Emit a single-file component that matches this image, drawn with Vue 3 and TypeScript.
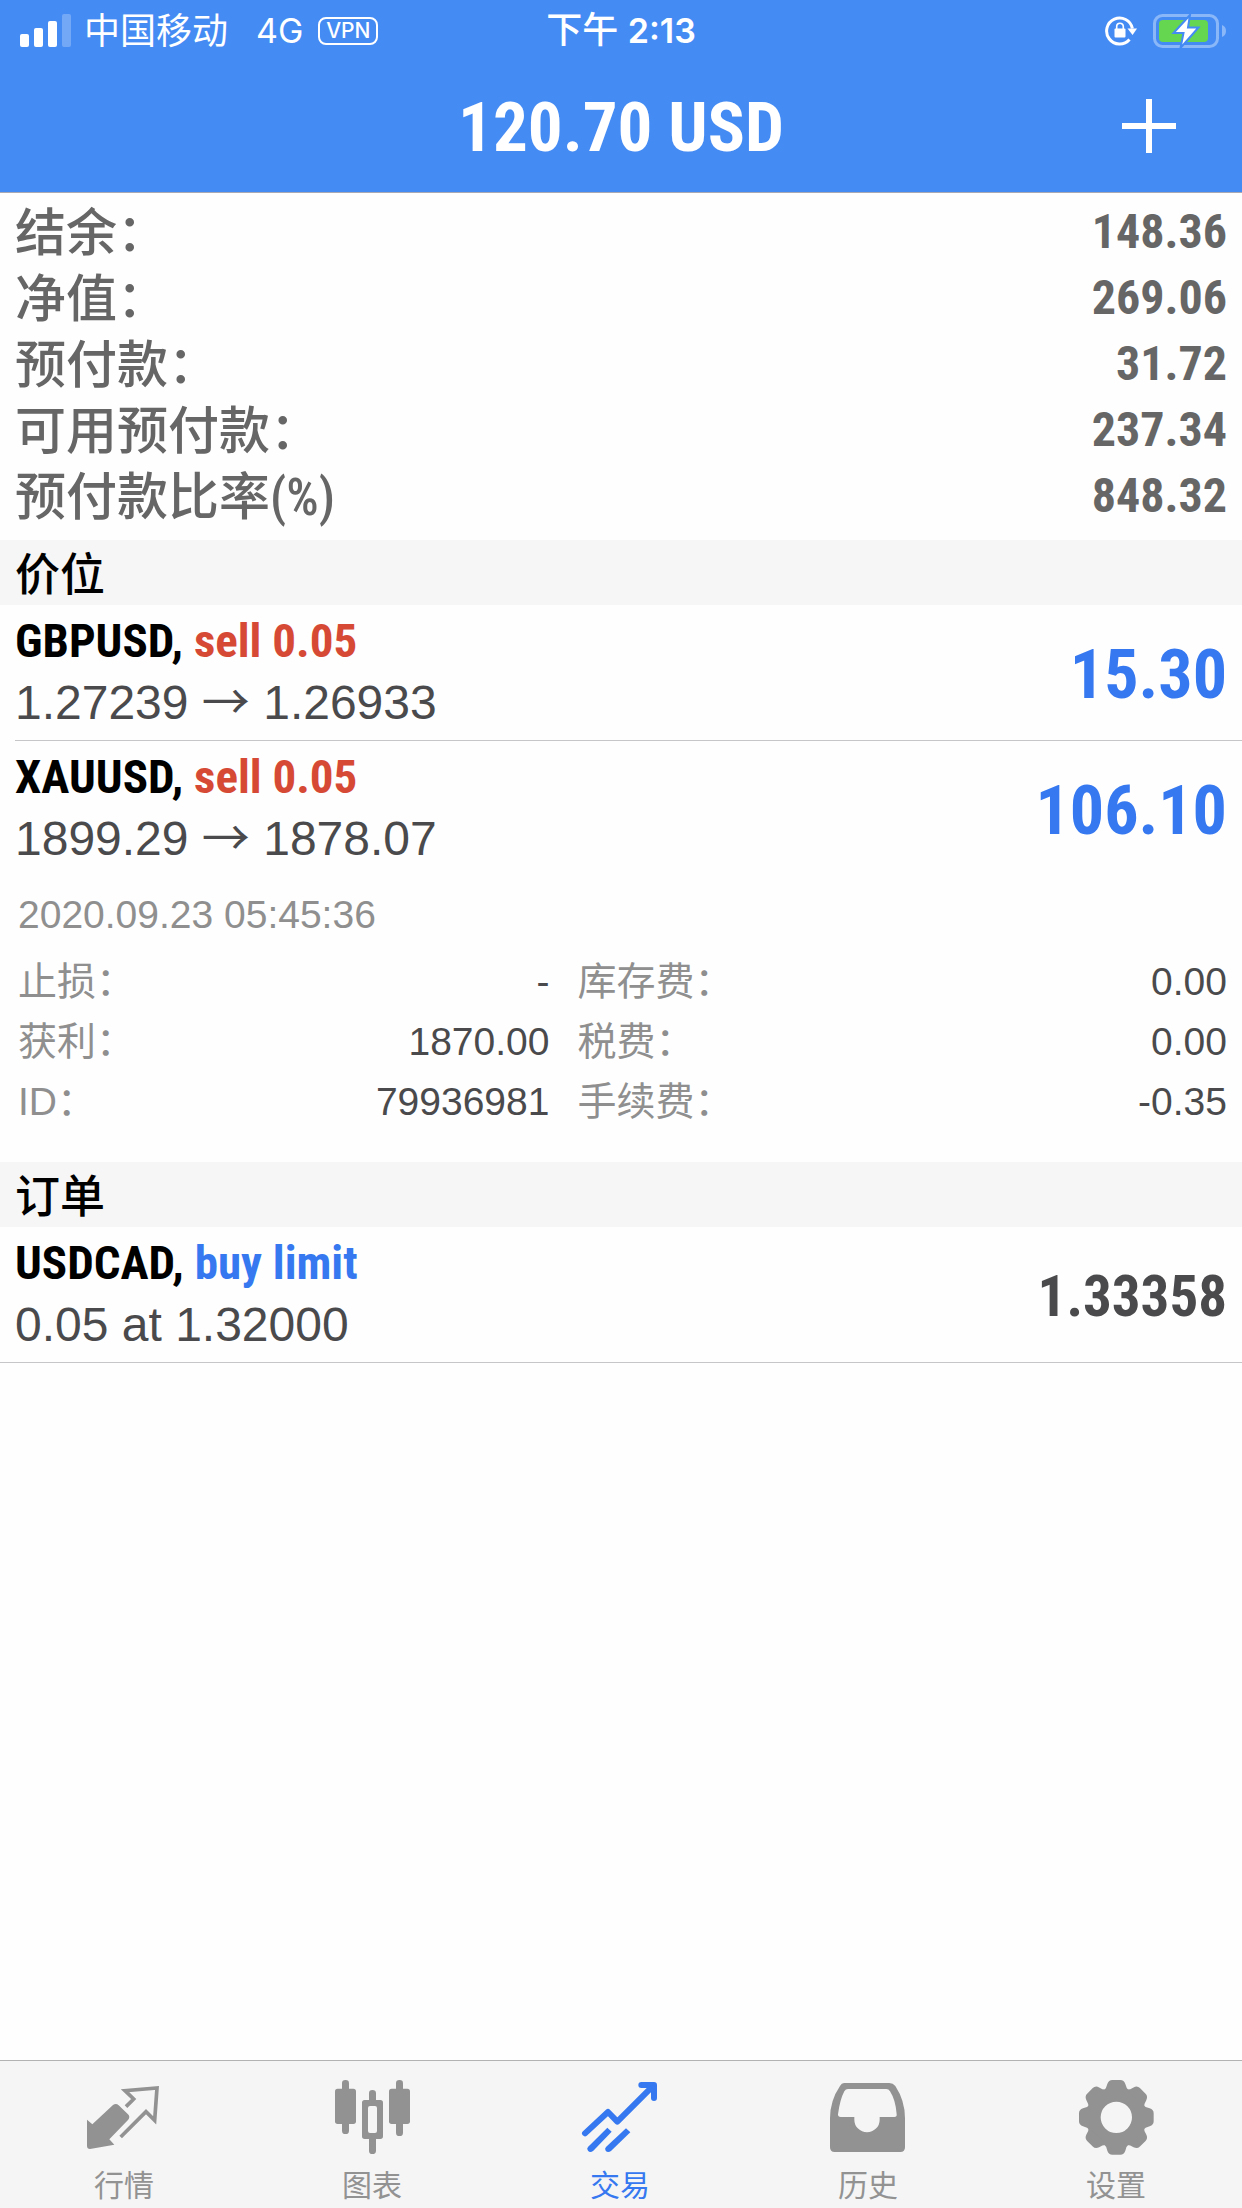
<script setup lang="ts">
import { ref } from 'vue'

interface Amount {
  label: string
  value: string
}

interface Position {
  symbol: string
  side: string
  open: string
  current: string
  profit: string
}

interface Tab {
  id: string
  label: string
}

const summary: Amount[] = [
  { label: '结余：', value: '148.36' },
  { label: '净值：', value: '269.06' },
  { label: '预付款：', value: '31.72' },
  { label: '可用预付款：', value: '237.34' },
  { label: '预付款比率(%)', value: '848.32' },
]

const positions: Position[] = [
  { symbol: 'GBPUSD', side: 'sell 0.05', open: '1.27239', current: '1.26933', profit: '15.30' },
  { symbol: 'XAUUSD', side: 'sell 0.05', open: '1899.29', current: '1878.07', profit: '106.10' },
]

const details: Amount[][] = [
  [
    { label: '止损：', value: '-' },
    { label: '获利：', value: '1870.00' },
    { label: 'ID：', value: '79936981' },
  ],
  [
    { label: '库存费：', value: '0.00' },
    { label: '税费：', value: '0.00' },
    { label: '手续费：', value: '-0.35' },
  ],
]

const tabs: Tab[] = [
  { id: 'quotes', label: '行情' },
  { id: 'charts', label: '图表' },
  { id: 'trade', label: '交易' },
  { id: 'history', label: '历史' },
  { id: 'settings', label: '设置' },
]

const activeTab = ref('trade')
const gearAngles = [0, 45, 90, 135, 180, 225, 270, 315]
</script>

<template>
  <div class="screen" lang="zh-CN">
    <header class="top">
      <div class="status">
        <div class="status-left">
          <svg class="signal" viewBox="0 0 52 34" aria-hidden="true">
            <rect x="0" y="20" width="9" height="13" rx="2" />
            <rect x="14" y="14" width="9" height="19" rx="2" />
            <rect x="28" y="7" width="9" height="26" rx="2" />
            <rect x="42" y="0" width="9" height="33" rx="2" opacity="0.25" />
          </svg>
          <span class="carrier">中国移动</span>
          <span class="network">4G</span>
          <span class="vpn">VPN</span>
        </div>
        <div class="clock">下午 <span class="time">2:13</span></div>
        <div class="status-right">
          <svg class="lock" viewBox="0 0 34 34" aria-hidden="true">
            <path d="M25.5 25.5 A13 13 0 1 1 28.4 14.5" fill="none" stroke="#fff" stroke-width="3" />
            <path d="M23.5 14.5 H33 L28.6 21 Z" fill="#fff" />
            <rect x="10.5" y="14.5" width="11" height="9" rx="1" fill="#fff" />
            <path d="M12.7 15 V12.5 A3.3 3.3 0 0 1 19.3 12.5 V15" fill="none" stroke="#fff" stroke-width="1.6" />
          </svg>
          <svg class="battery" viewBox="0 0 74 36" aria-hidden="true">
            <rect x="2.5" y="2.5" width="63" height="31" rx="8" fill="none" stroke="#8ab7f8" stroke-width="3" />
            <path d="M70 12 Q74 13.5 74 18 Q74 22.5 70 24 Z" fill="#8ab7f8" />
            <rect x="7" y="7" width="49" height="22" rx="4" fill="#65d650" />
            <path d="M38 2 L21.5 20 H31.5 L28.5 35 L46.5 14.5 H36 Z" fill="#fff" stroke="#458bf4" stroke-width="2" />
          </svg>
        </div>
      </div>
      <div class="nav">
        <h1 class="total">120.70 USD</h1>
        <button class="add" type="button" aria-label="新订单">
          <svg viewBox="0 0 54 54" aria-hidden="true"><path d="M24 0h6v24h24v6H30v24h-6V30H0v-6h24z" /></svg>
        </button>
      </div>
    </header>

    <main class="content">
      <dl class="summary">
        <div v-for="row in summary" :key="row.label" class="summary-row">
          <dt>{{ row.label }}</dt>
          <dd>{{ row.value }}</dd>
        </div>
      </dl>

      <section>
        <h2 class="heading">价位</h2>
        <ul class="list">
          <li v-for="p in positions" :key="p.symbol" class="item">
            <div class="deal">
              <div>
                <div class="symbol">{{ p.symbol }}, <span class="sell">{{ p.side }}</span></div>
                <div class="prices">{{ p.open }} <span class="arrow">→</span> {{ p.current }}</div>
              </div>
              <div class="profit">{{ p.profit }}</div>
            </div>
          </li>
        </ul>
        <div class="details">
          <time class="date" datetime="2020-09-23T05:45:36">2020.09.23 05:45:36</time>
          <div class="columns">
            <dl v-for="(column, i) in details" :key="i" class="column">
              <div v-for="d in column" :key="d.label" class="detail-row">
                <dt>{{ d.label }}</dt>
                <dd>{{ d.value }}</dd>
              </div>
            </dl>
          </div>
        </div>
      </section>

      <section>
        <h2 class="heading">订单</h2>
        <ul class="list orders">
          <li class="item">
            <div class="deal">
              <div>
                <div class="symbol">USDCAD, <span class="buy">buy limit</span></div>
                <div class="prices">0.05 at 1.32000</div>
              </div>
              <div class="market">1.33358</div>
            </div>
          </li>
        </ul>
      </section>
    </main>

    <nav class="tabs">
      <button
        v-for="tab in tabs"
        :key="tab.id"
        type="button"
        class="tab"
        :class="{ active: tab.id === activeTab }"
        @click="activeTab = tab.id"
      >
        <svg v-if="tab.id === 'quotes'" class="icon" viewBox="255 84 234 234" aria-hidden="true">
          <path d="M261 209 L277 223 L339 165 Q348 158 356 166 L384 193 Q392 201 384 210 L328 268 L343 284 L270 297 Q261 297 261 288 Z" fill="currentColor" />
          <path d="M378 170 L401 147 L375 122 L471 114 L464 211 L438 185 L362 261" fill="none" stroke="currentColor" stroke-width="11" />
        </svg>
        <svg v-else-if="tab.id === 'charts'" class="icon" viewBox="999 84 234 234" aria-hidden="true">
          <g fill="currentColor">
            <rect x="1026" y="90" width="21" height="162" rx="10" />
            <rect x="1005" y="116" width="63" height="106" rx="8" />
            <rect x="1188" y="90" width="21" height="168" rx="10" />
            <rect x="1167" y="116" width="63" height="106" rx="8" />
            <path d="M1107 150 V130 Q1107 120 1117 120 Q1128 120 1128 130 V150 H1141 Q1149 150 1149 158 V259 Q1149 267 1141 267 H1128 V302 Q1128 312 1117 312 Q1107 312 1107 302 V267 H1094 Q1086 267 1086 259 V158 Q1086 150 1094 150 Z M1110 168 Q1104 168 1104 174 V243 Q1104 249 1110 249 H1125 Q1131 249 1131 243 V174 Q1131 168 1125 168 Z" fill-rule="evenodd" />
          </g>
        </svg>
        <svg v-else-if="tab.id === 'trade'" class="icon" viewBox="483 84 234 234" aria-hidden="true">
          <g fill="none" stroke="currentColor" stroke-width="18" stroke-linecap="round" stroke-linejoin="round">
            <path d="M495 250 L564 186 L592 215 L697 110" />
            <path d="M664 105 H702 V144" />
          </g>
          <path d="M690 106 H704 V120 Z" fill="currentColor" />
          <path d="M504 291 L562 233 L575 245 L520 302 Q510 310 504 302 Q499 296 504 291 Z" fill="currentColor" />
          <path d="M558 291 L618 235 L631 247 L573 303 Q563 309 557 302 Q553 296 558 291 Z" fill="currentColor" />
        </svg>
        <svg v-else-if="tab.id === 'history'" class="icon" viewBox="-33 84 234 234" aria-hidden="true">
          <path d="M12 99 H148 Q159 99 166 108 Q195 152 195 205 V292 Q195 306 181 306 H-16 Q-30 306 -30 292 V205 Q-30 152 0 108 Q5 99 12 99 Z M24 117 Q17 117 13 124 Q0 148 -6 193 Q-6 201 2 201 H43 V209 A38 38 0 0 0 119 209 V201 H163 Q171 201 170 193 Q167 150 150 124 Q146 117 139 117 Z" fill="currentColor" fill-rule="evenodd" />
        </svg>
        <svg v-else class="icon" viewBox="711 84 234 234" aria-hidden="true">
          <g transform="translate(829 202)">
            <circle r="68" fill="none" stroke="currentColor" stroke-width="42" />
            <path
              v-for="a in gearAngles"
              :key="a"
              :transform="`rotate(${a})`"
              d="M-38 -80 Q-30 -86 -27 -100 Q-23 -112 -12 -112 H12 Q23 -112 27 -100 Q30 -86 38 -80 Z"
              fill="currentColor"
            />
          </g>
        </svg>
        <span class="tab-label">{{ tab.label }}</span>
      </button>
    </nav>
  </div>
</template>

<style>
body {
  margin: 0;
}
</style>

<style scoped>
.screen {
  display: flex;
  flex-direction: column;
  min-height: 100vh;
  background: #fefefe;
  color: #4a4a4c;
  font-family: "Liberation Sans", "Noto Sans CJK SC", sans-serif;
}

h1,
h2,
dl,
dd,
ul {
  margin: 0;
  padding: 0;
}

button {
  margin: 0;
  padding: 0;
  border: 0;
  background: none;
  font: inherit;
  color: inherit;
}

svg {
  display: block;
}

.top {
  background: #458bf4;
  border-bottom: 1px solid #a9a9b3;
  color: #fff;
}

.status {
  display: grid;
  grid-template-columns: 1fr auto 1fr;
  align-items: center;
  height: 60px;
  padding: 0 16px 0 20px;
  font-family: Inter, "Noto Sans CJK SC", sans-serif;
  font-size: 36px;
  line-height: 60px;
}

.status-left,
.status-right {
  display: flex;
  align-items: center;
}

.status-right {
  justify-content: flex-end;
  gap: 14px;
}

.signal {
  width: 52px;
  height: 34px;
  fill: #fff;
}

.carrier {
  margin-left: 12px;
}

.network {
  margin-left: 28px;
  font-size: 34px;
}

.vpn {
  box-sizing: border-box;
  width: 60px;
  height: 28px;
  margin-left: 15px;
  border: 2px solid #fff;
  border-radius: 8px;
  font-size: 21px;
  font-weight: 500;
  line-height: 24px;
  text-align: center;
}

.clock {
  padding-right: 4px;
  font-weight: 500;
}

.time {
  font-size: 34px;
  font-weight: 600;
}

.lock {
  width: 34px;
  height: 34px;
}

.battery {
  width: 74px;
  height: 36px;
}

.nav {
  display: grid;
  grid-template-columns: 1fr auto 1fr;
  align-items: center;
  height: 132px;
}

.total {
  grid-column: 2;
  padding-top: 4px;
  font-family: "Roboto Condensed", "Liberation Sans Narrow", "Liberation Sans", sans-serif;
  font-size: 69px;
  font-weight: 700;
  line-height: 128px;
}

.add {
  justify-self: end;
  padding: 39px 66px;
}

.add svg {
  width: 54px;
  height: 54px;
  fill: #fff;
}

.content {
  flex: 1;
}

.summary {
  padding: 8px 15px 9px;
  color: #666;
}

.summary-row {
  display: flex;
  align-items: flex-start;
  justify-content: space-between;
  height: 66px;
}

.summary dt,
.summary dd,
.symbol,
.profit,
.market {
  font-family: "Roboto Condensed", "Liberation Sans Narrow", "Liberation Sans", "Noto Sans CJK SC", sans-serif;
  font-weight: 700;
}

.summary dt {
  font-size: 51px;
  font-weight: 500;
  line-height: 66px;
}

.summary dd {
  font-size: 48px;
  line-height: 62px;
}

.heading {
  height: 65px;
  padding: 0 15px;
  background: #f6f6f6;
  color: #000;
  font-family: "Noto Sans CJK SC", sans-serif;
  font-size: 45px;
  font-weight: 500;
  line-height: 63px;
}

.list {
  list-style: none;
}

.item {
  padding-left: 15px;
}

.deal {
  display: flex;
  align-items: center;
  justify-content: space-between;
  height: 133px;
  padding: 0 15px 2px 0;
}

.item + .item .deal {
  border-top: 1px solid #c6c6c9;
}

.orders {
  border-bottom: 1px solid #c6c6c9;
}

.symbol {
  color: #000;
  font-size: 47px;
  line-height: 62px;
}

.prices {
  font-size: 48px;
  line-height: 62px;
}

.arrow {
  font-family: "Noto Sans CJK SC", sans-serif;
  line-height: 48px;
}

.sell {
  color: #d64a35;
}

.buy,
.profit {
  color: #3578f0;
}

.profit,
.market {
  padding-top: 6px;
}

.profit {
  font-size: 68px;
}

.market {
  font-size: 57px;
}

.details {
  padding: 9px 15px 30px 18px;
  font-size: 39px;
  line-height: 60px;
}

.date {
  display: block;
  color: #8f8f8f;
}

.columns {
  display: grid;
  grid-template-columns: 45fr 55fr;
  gap: 28px;
  padding-top: 7px;
}

.detail-row {
  display: flex;
  justify-content: space-between;
  height: 60px;
}

.detail-row dt {
  color: #8f8f8f;
}

.tabs {
  display: grid;
  grid-template-columns: repeat(5, 1fr);
  height: 147px;
  padding-right: 2px;
  border-top: 1px solid #b2b2b2;
  background: #f5f5f5;
}

.tab {
  display: flex;
  flex-direction: column;
  align-items: center;
  padding-top: 17px;
  color: #929292;
}

.active {
  color: #3578f0;
}

.icon {
  width: 78px;
  height: 78px;
}

.tab-label {
  margin-top: 5px;
  font-family: "Noto Sans CJK SC", sans-serif;
  font-size: 30px;
  line-height: 44px;
}
</style>
